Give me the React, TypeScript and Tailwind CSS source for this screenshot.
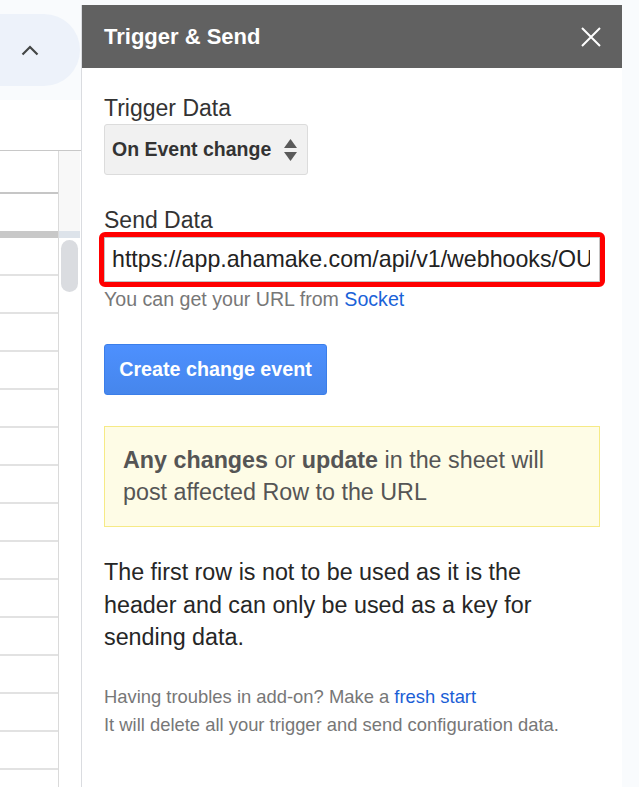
import { useState } from "react";

const rows = Array.from({ length: 14 }, (_, i) => i);

const SheetEdge = () => {
  return (
    <div className="flex w-[81px] shrink-0 flex-col">
      <div className="h-[100px] pt-[14px]">
        <div className="flex h-[72px] w-[80px] items-center rounded-r-full bg-[#edf2fa] pl-[21px]">
          <svg width="18" height="12" viewBox="0 0 18 12" fill="none">
            <path d="M1.5 10.5 9 3l7.5 7.5" stroke="#444746" strokeWidth="2.2" />
          </svg>
        </div>
      </div>
      <div className="flex-1 bg-white pt-[50px]">
        <div className="flex h-full border-t border-[#c8c8c8]">
          <div className="flex w-[58px] flex-col overflow-hidden">
            <div className="h-[43px] shrink-0 border-b-2 border-[#c6c6c6]" />
            <div className="h-[44px] shrink-0 border-b-[7px] border-[#c8c8c8]" />
            {rows.map((r) => (
              <div key={r} className="h-[38px] shrink-0 border-b-2 border-[#e2e2e2]" />
            ))}
          </div>
          <div className="flex w-[22px] flex-col border-l border-[#dadada]">
            <div className="h-[80px] bg-[#f8f8f8]" />
            <div className="h-[7px] bg-[#dde3ea]" />
            <div className="ml-[2px] mt-[2px] h-[52px] w-[17px] rounded-full bg-[#dadce0]" />
          </div>
        </div>
      </div>
    </div>
  );
};

export default function App() {
  const [url, setUrl] = useState(
    "https://app.ahamake.com/api/v1/webhooks/OUq7Hk2LxZrT9mVb3sWd"
  );

  return (
    <div className="flex h-[787px] w-[639px] overflow-hidden bg-[#f9fbfd] font-['Liberation_Sans',Arial,sans-serif]">
      <SheetEdge />
      <div className="mt-[5px] flex w-[541px] shrink-0 flex-col border-l border-[#dadce0] bg-white">
        <div className="flex h-[63px] shrink-0 items-center justify-between bg-[#616161] px-[22px]">
          <span className="text-[22px] font-bold leading-[28px] text-white">Trigger &amp; Send</span>
          <svg width="20" height="20" viewBox="0 0 20 20" fill="none" className="mr-[-1px]">
            <path d="M1 1l18 18M19 1 1 19" stroke="#ffffff" strokeWidth="2" />
          </svg>
        </div>

        <div className="flex flex-col px-[22px] pt-[28px]">
          <label className="text-[23px] leading-[24px] text-[#333333]">Trigger Data</label>
          <div className="mt-[4px] flex h-[51px] w-[204px] items-center justify-between rounded-[3px] border border-[#dcdcdc] bg-[#f1f1f1] pl-[7px] pr-[10px]">
            <span className="text-[19.5px] font-bold text-[#333333]">On Event change</span>
            <svg width="13" height="24" viewBox="0 0 13 24" fill="#5a5a5a">
              <path d="M6.5 1 13 10H0z" />
              <path d="M0 14h13l-6.5 9z" />
            </svg>
          </div>

          <label className="mt-[33px] text-[23px] leading-[24px] text-[#333333]">Send Data</label>
          <input
            value={url}
            onChange={(e) => setUrl(e.target.value)}
            className="mt-[5px] h-[45px] w-[496px] rounded-[1px] border border-[#c4c4c4] bg-white pl-[7px] pr-[9px] text-[23.2px] text-[#222222] outline-[5px] outline-[#ff0000]"
          />
          <p className="mt-[5px] text-[19.6px] leading-[24px] text-[#777777]">
            You can get your URL from <a className="text-[#1a62d8]">Socket</a>
          </p>

          <button className="mt-[33px] h-[51px] w-[223px] rounded-[3px] border border-[#3b7ee9] bg-gradient-to-b from-[#4d90fe] to-[#4686ec] text-[19.7px] font-bold text-white">
            Create change event
          </button>

          <div className="mt-[31px] border border-[#f6ea86] bg-[#fefce6] px-[18px] pb-[18px] pt-[17px] text-[23.3px] leading-[32px] text-[#555555]">
            <div>
              <b>Any changes</b> <span>or</span> <b>update</b> <span>in the sheet will</span>
            </div>
            <div>post affected Row to the URL</div>
          </div>

          <p className="mt-[29px] max-w-[485px] text-[23.3px] leading-[32.5px] text-[#262626]">
            The first row is not to be used as it is the header and can only be used as a key for sending data.
          </p>

          <div className="mt-[29px] text-[18.4px] leading-[28.5px] text-[#777777]">
            <div>
              Having troubles in add-on? Make a <a className="text-[#1a5ed6]">fresh start</a>
            </div>
            <div>It will delete all your trigger and send configuration data.</div>
          </div>
        </div>
      </div>
      <div className="flex-1" />
    </div>
  );
}
